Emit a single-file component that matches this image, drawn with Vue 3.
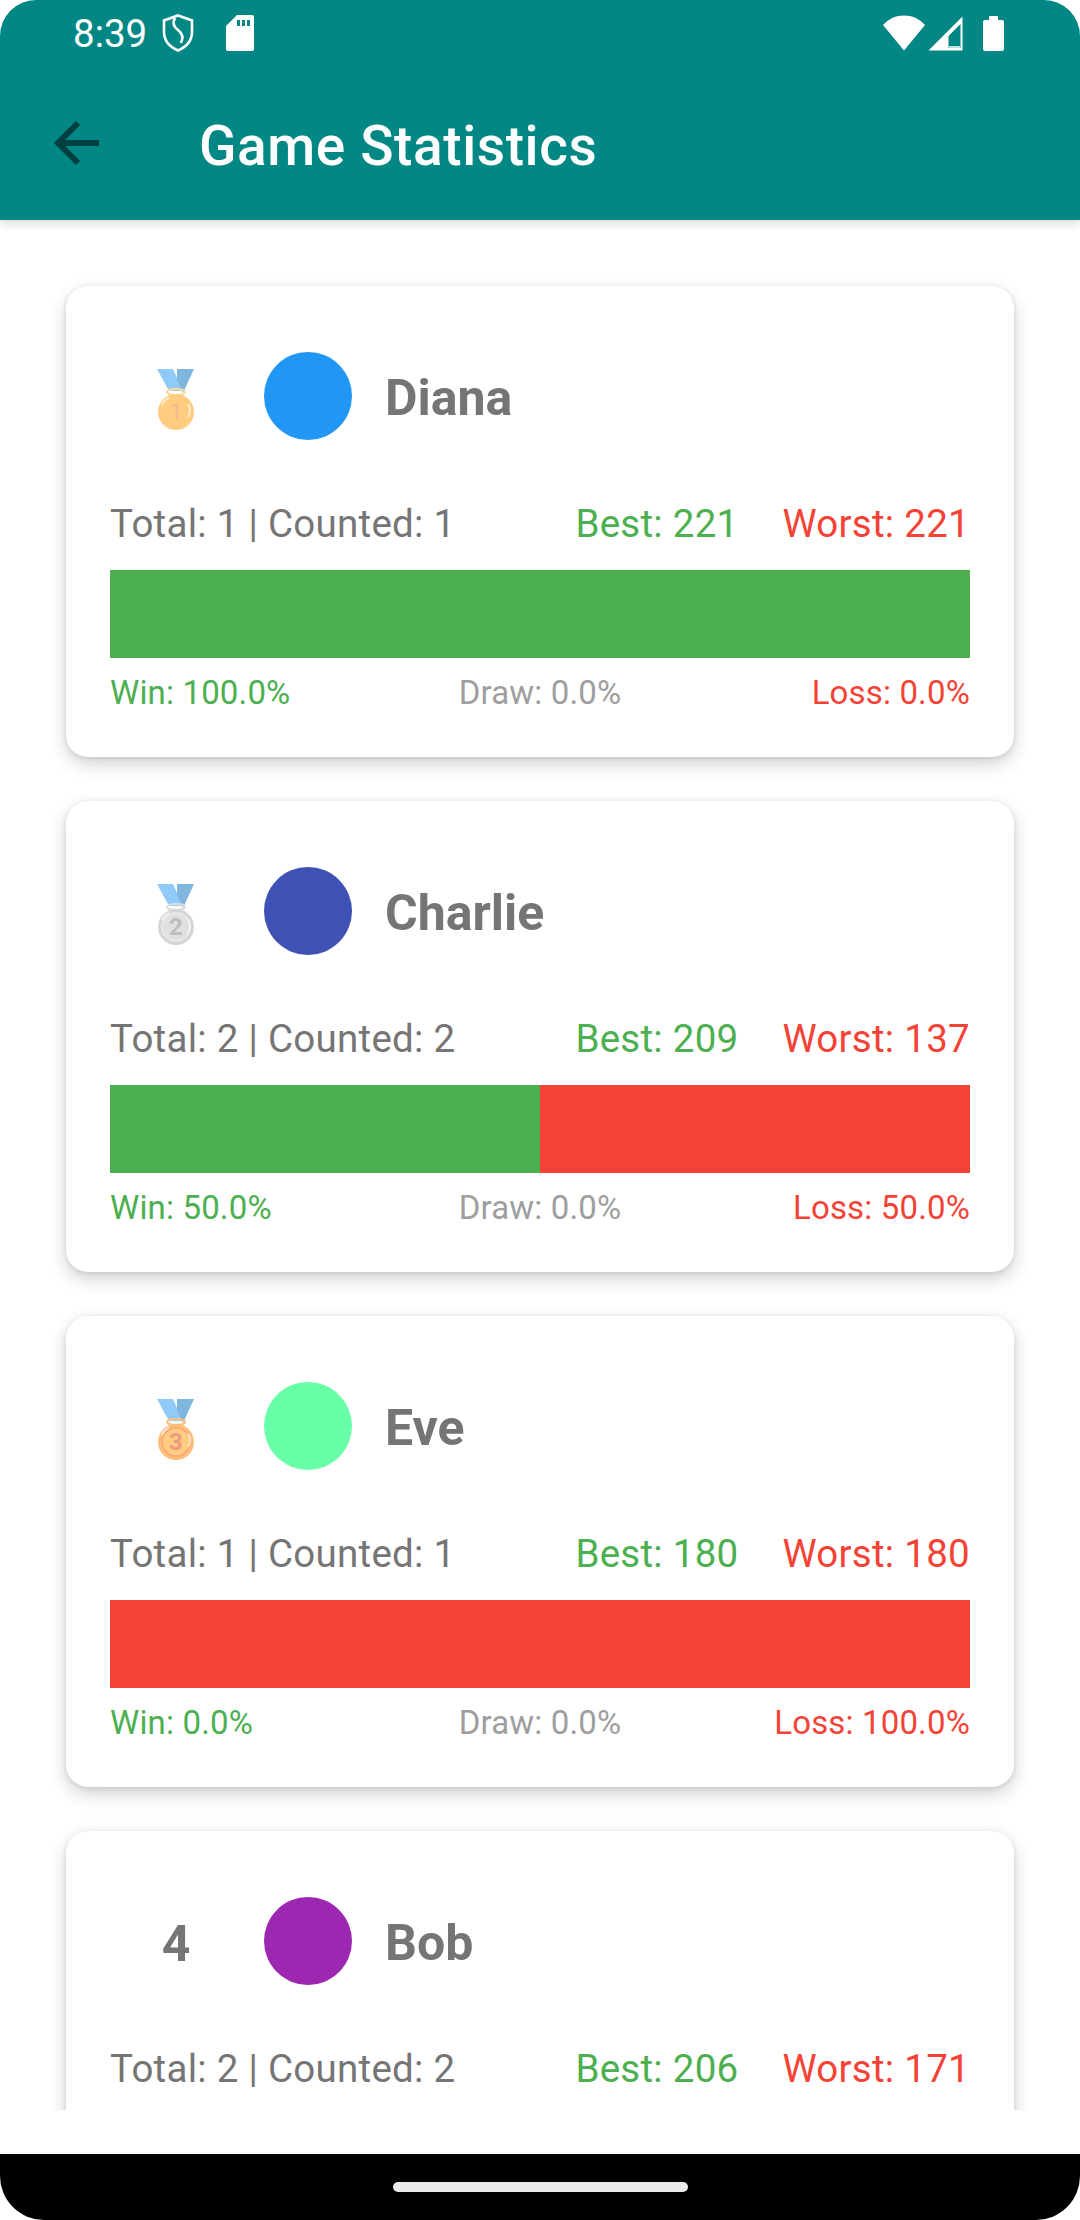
<script setup>
const players = [
	{ rank: 1, name: 'Diana', color: '#2196F3', total: 1, counted: 1, best: 221, worst: 221, win: 100, loss: 0 },
	{ rank: 2, name: 'Charlie', color: '#3F51B5', total: 2, counted: 2, best: 209, worst: 137, win: 50, loss: 50 },
	{ rank: 3, name: 'Eve', color: '#69FFA8', total: 1, counted: 1, best: 180, worst: 180, win: 0, loss: 100 },
	// the rest of Bob's card is scrolled off below the list
	{ rank: 4, name: 'Bob', color: '#9C27B0', total: 2, counted: 2, best: 206, worst: 171 },
]

const medals = {
	1: { body: '#FFCC80', rim: '#FFCC80', ring: '#FFD9A0', digit: '#F7B295' },
	2: { body: '#E0E0E0', rim: '#D6D6D6', ring: '#DDDDDD', digit: '#BDBDBD' },
	3: { body: '#FFCC80', rim: '#FFBE78', ring: '#FFC27A', digit: '#EE9A80' },
}
</script>

<template>
	<div class="screen">
		<header class="appbar">
			<div class="status">
				<span class="time">8:39</span>
				<svg class="shield" width="32" height="38" viewBox="0 0 32 38" fill="none" stroke="#fff" stroke-width="2.6">
					<path d="M16 1.5 30 6.5V18c0 8.5-6 15-14 18.5C8 33 2 26.500 2 18V6.500Z" />
					<path d="M13 4c-3 5-1 9 3 12s6 7 3 13" />
				</svg>
				<svg class="sd" width="28" height="36" viewBox="0 0 28 36" fill="#fff">
					<path d="M11 0h15a2 2 0 0 1 2 2v32a2 2 0 0 1-2 2H2a2 2 0 0 1-2-2V11Z" />
					<path fill="#028785" d="M11 5h3v6h-3zM16 5h3v6h-3zM21 5h3v6h-3z" />
				</svg>
				<span class="spacer"></span>
				<svg class="wifi" width="42" height="36" viewBox="0 0 42 36" fill="#fff">
					<path d="M0 10C6 3.500 13 .5 21 .5S36 3.500 42 10L21 35.500Z" />
				</svg>
				<svg class="signal" width="35" height="35" viewBox="0 0 35 35">
					<path fill="#fff" fill-rule="evenodd" d="M34.500 0.500V34.500H0.500ZM32.500 8 20.500 20V32H32.500Z" />
					<path fill="none" stroke="#fff" stroke-width="1.500" d="M21 31h11" />
				</svg>
				<svg class="battery" width="21" height="35" viewBox="0 0 21 35" fill="#fff">
					<path d="M6 0h9v4h4a2 2 0 0 1 2 2v27a2 2 0 0 1-2 2H2a2 2 0 0 1-2-2V6a2 2 0 0 1 2-2h4Z" />
				</svg>
			</div>
			<div class="toolbar">
				<svg class="back" width="46" height="46" viewBox="0 0 46 46" fill="none" stroke="#003F3F" stroke-width="6">
					<path d="M45 23H5M24 3 4 23l20 20" />
				</svg>
				<h1 class="title">Game Statistics</h1>
			</div>
		</header>

		<main class="list">
			<section v-for="p in players" :key="p.name" class="card">
				<div class="head">
					<div class="rank">
						<svg v-if="medals[p.rank]" width="40" height="72" viewBox="0 -6 40 72">
							<path fill="#90CAF9" d="M1 3H17L27 25H13Z" />
							<path fill="#7FB6DE" d="M21 3H38L27 27 21 14Z" />
							<ellipse cx="20" cy="26" rx="9" ry="3" fill="none" stroke-width="2" :stroke="medals[p.rank].ring" />
							<circle cx="20" cy="46" r="18" :fill="medals[p.rank].rim" />
							<circle v-if="p.rank > 1" cx="20" cy="46" r="14" :fill="medals[p.rank].body" :stroke="p.rank === 2 ? '#EBEBEB' : '#F7A878'" stroke-width="1.500" />
							<path d="M32 38c2 3 3 8 0 13M6 39c1-3 4-6 7-7" fill="none" stroke="#fff" stroke-width="1.400" opacity=".8" />
							<text x="20" y="54" text-anchor="middle" class="medal-digit" :class="{ faint: p.rank === 1 }" :fill="medals[p.rank].digit">{{ p.rank }}</text>
						</svg>
						<span v-else class="rank-num">{{ p.rank }}</span>
					</div>
					<div class="avatar" :style="{ background: p.color }"></div>
					<div class="name">{{ p.name }}</div>
				</div>

				<div class="stats">
					<span class="totals">Total: {{ p.total }} | Counted: {{ p.counted }}</span>
					<span class="scores">
						<span class="green">Best: {{ p.best }}</span>
						<span class="red">Worst: {{ p.worst }}</span>
					</span>
				</div>

				<template v-if="p.win !== undefined">
					<div class="bar">
						<div class="seg win" :style="{ width: p.win + '%' }"></div>
						<div class="seg loss" :style="{ width: p.loss + '%' }"></div>
					</div>

					<div class="legend">
						<span class="green">Win: {{ p.win.toFixed(1) }}%</span>
						<span class="draw">Draw: 0.0%</span>
						<span class="red right">Loss: {{ p.loss.toFixed(1) }}%</span>
					</div>
				</template>
			</section>
		</main>

		<div class="gap"></div>
		<footer class="nav">
			<div class="pill"></div>
		</footer>
	</div>
</template>

<style>
html,
body {
	margin: 0;
	background: #fff;
}
</style>

<style scoped>
.screen {
	width: 1080px;
	height: 2220px;
	display: flex;
	flex-direction: column;
	overflow: hidden;
	background: #fff;
	border-radius: 36px 36px 44px 44px;
	font-family: Roboto, sans-serif;
	position: relative;
}

.appbar {
	flex: 0 0 220px;
	background: #028785;
	box-shadow: 0 3px 10px rgba(0, 0, 0, 0.16);
	position: relative;
	z-index: 1;
}

.status {
	height: 66px;
	display: flex;
	align-items: center;
	padding: 0 76px 0 73px;
	color: #fff;
}

.time {
	font-size: 38.500px;
	line-height: 66px;
	width: 89px;
	margin-top: 1px;
}

.shield {
	margin-right: 32px;
}

.spacer {
	flex: 1;
}

.signal {
	margin-left: 3px;
}

.battery {
	margin-left: 20px;
}

.toolbar {
	height: 154px;
	display: flex;
	align-items: center;
	padding-left: 54px;
	box-sizing: border-box;
}

.title {
	margin: 5px 0 0 99px;
	font-size: 55px;
	font-weight: 500;
	color: #fff;
	letter-spacing: 0.6px;
}

.list {
	flex: 0 0 1890px;
	box-sizing: border-box;
	padding: 66px 66px 0;
	overflow: hidden;
	display: flex;
	flex-direction: column;
	gap: 44px;
}

.card {
	flex: none;
	height: 471px;
	box-sizing: border-box;
	padding: 44px;
	background: #fff;
	border-radius: 22px;
	box-shadow: 0 7px 18px rgba(0, 0, 0, 0.18), 0 1px 5px rgba(0, 0, 0, 0.1);
}

.head {
	height: 132px;
	display: flex;
	align-items: center;
}

.rank {
	width: 132px;
	height: 132px;
	display: flex;
	align-items: center;
	justify-content: center;
}

.rank-num {
	font-size: 50px;
	font-weight: 700;
	color: #757575;
	margin-top: 5px;
}

.medal-digit {
	font-size: 24px;
	font-weight: 700;
	font-family: Roboto, sans-serif;
}

.medal-digit.faint {
	font-weight: 400;
	opacity: 0.7;
}

.avatar {
	width: 88px;
	height: 88px;
	border-radius: 50%;
	margin-left: 22px;
}

.name {
	margin: 4px 0 0 33px;
	font-size: 50px;
	font-weight: 700;
	color: #757575;
}

.stats {
	margin-top: 38px;
	height: 46px;
	display: flex;
	justify-content: space-between;
	align-items: center;
	font-size: 38.500px;
	letter-spacing: 0.27px;
	color: #757575;
}

.scores {
	display: flex;
	gap: 44px;
}

.green {
	color: #4CAF50;
}

.red {
	color: #F44336;
}

.bar {
	margin-top: 24px;
	height: 88px;
	display: flex;
}

.seg.win {
	background: #4CAF50;
}

.seg.loss {
	background: #F44336;
}

.legend {
	margin-top: 15px;
	display: grid;
	grid-template-columns: 1fr auto 1fr;
	font-size: 33px;
	line-height: 40px;
	letter-spacing: 0.15px;
}

.right {
	text-align: right;
}

.draw {
	color: #9E9E9E;
}

.gap {
	flex: 0 0 44px;
	background: #fff;
	position: relative;
}

.nav {
	flex: 0 0 66px;
	background: #000;
	display: flex;
	justify-content: center;
	padding-top: 28px;
	box-sizing: border-box;
}

.pill {
	width: 295px;
	height: 10px;
	border-radius: 5px;
	background: #EAEAEA;
}
</style>
